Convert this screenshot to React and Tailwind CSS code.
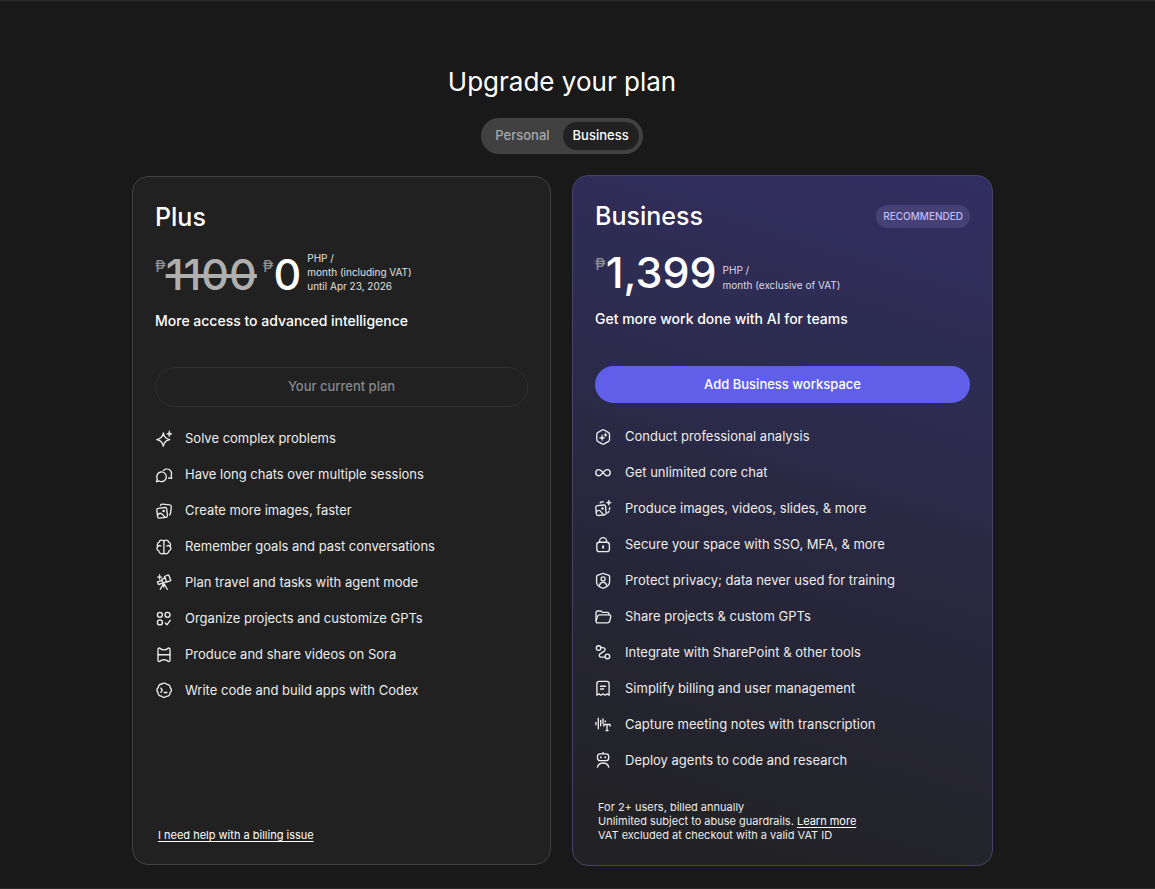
import React, { useState } from 'react'
import clsx from 'clsx'

function Icon({ children }) {
  return (
    <svg
      className="size-[18px] shrink-0"
      viewBox="0 0 18 18"
      fill="none"
      stroke="currentColor"
      strokeWidth="1.35"
      strokeLinecap="round"
      strokeLinejoin="round"
      aria-hidden="true"
    >
      {children}
    </svg>
  )
}

const icons = {
  sparkles: (
    <>
      <path d="M8.3 3c.7 4.200 2.200 5.900 6.400 6.600-4.200.7-5.700 2.400-6.400 6.600-.7-4.200-2.300-5.900-6.500-6.600C6 8.900 7.600 7.200 8.300 3Z" />
      <path fill="currentColor" strokeWidth=".7" d="M14.300 1c.3 2 .8 2.600 2.700 2.900-1.900.3-2.400.9-2.700 2.900-.3-2-.8-2.600-2.700-2.900 1.900-.3 2.400-.9 2.700-2.900Z" />
    </>
  ),
  chats: (
    <>
      <path d="M1.500 15.700l.8-2.700a4.800 4.800 0 1 1 2 2l-2.800.7Z" />
      <path d="M8.500 4.400c1-1 2.300-1.600 3.700-1.500a4.600 4.600 0 0 1 4 6.500l.5 3-3.100-.4" />
    </>
  ),
  images: (
    <>
      <path d="M3.300 6.300l6.500-.8a1.700 1.700 0 0 1 1.900 1.400l.7 6.500a1.700 1.700 0 0 1-1.400 1.900l-6.500.8A1.700 1.700 0 0 1 2.600 14.700l-.8-6.500A1.700 1.700 0 0 1 3.300 6.300Z" />
      <path d="M2.500 13.200c2-2.600 3.600-2.500 5.200-.4l2.500 2.600" />
      <circle cx="8.600" cy="9" r=".6" fill="currentColor" />
      <path d="M5.400 3.500c.3-1 1-1.500 2-1.400l7.300.8c1.100.2 1.800 1 1.600 2.100l-.8 6.400c-.1.700-.5 1.200-1.100 1.400" />
    </>
  ),
  brain: (
    <>
      <path d="M8.900 2.300v13.200M8.900 3.300C7.800 1.400 4.500 1.700 4.200 4.200 2.400 4.700 1.700 6.900 2.800 8.200c-1.500 1.400-1 4 1 4.600.3 2.900 3.900 3.900 5.100 2M8.900 3.300c1.100-1.900 4.400-1.600 4.700.9 1.800.5 2.500 2.700 1.400 4 1.500 1.400 1 4-1 4.600-.3 2.900-3.900 3.900-5.100 2" />
      <path d="M3 8.200c.9-.8 2-.8 2.900-.2M14.800 8.200c-.9-.8-2-.8-2.900-.2" />
    </>
  ),
  telescope: (
    <>
      <path fill="currentColor" strokeWidth=".6" d="M4.600.4c.3 1.900.8 2.400 2.600 2.700-1.800.3-2.300.8-2.600 2.700-.3-1.900-.8-2.400-2.600-2.700C3.800 2.800 4.300 2.300 4.600.4Z" />
      <path d="M9.600 2.500l3.200-1.500c.5-.2.900 0 1.100.5l1.800 4.400c.2.500 0 .9-.5 1L11.600 8 9.600 2.500ZM10 3.700L6.700 5.500l1.400 3.600 3.500-1.400M6.900 6.300L2.500 7.900l1 2.700 4.300-1.700" />
      <path d="M8.700 9.800v3.200M8.200 10l-2.900 5.300M9.300 10l2.900 5.300" />
    </>
  ),
  apps: (
    <>
      <circle cx="4.900" cy="4.800" r="2.500" />
      <circle cx="12.500" cy="4.800" r="2.500" />
      <circle cx="4.900" cy="12.400" r="2.500" />
      <path d="M10.200 13.100l1.700 1.700 3.300-4.500" />
    </>
  ),
  film: (
    <>
      <path d="M3 3.300c0-1.300 1.500-1.800 2.300-.8.700 1 1.600 1.300 3.700 1.300s3-.3 3.700-1.300c.8-1 2.300-.5 2.300.8v10.900c0 1.300-1.500 1.800-2.300.8-.7-1-1.600-1.300-3.700-1.300s-3 .3-3.700 1.300c-.8 1-2.300.5-2.300-.8V3.300Z" />
      <path d="M3 8.700h12" />
    </>
  ),
  codex: (
    <>
      <path d="M6.900 2c1.500-1.300 3.700-1.200 5 .3 1.900.1 3.400 1.600 3.400 3.500 1.300 1.500 1.200 3.700-.2 5-.1 1.900-1.600 3.500-3.600 3.500-1.500 1.300-3.700 1.200-5-.2-1.900-.1-3.500-1.600-3.500-3.600-1.300-1.500-1.200-3.700.3-5C3.400 3.600 4.900 2.100 6.900 2Z" />
      <path d="M5.900 6.100l1.300 2.100-1.300 2.100M9.200 10.500h2.700" />
    </>
  ),
  analysis: (
    <>
      <path d="M7.200 2a1.900 1.900 0 0 1 1.900 0l4.500 2.600c.6.400.9.900.9 1.600v5.500c0 .7-.3 1.200-.9 1.600L9.100 15.900a1.900 1.900 0 0 1-1.900 0l-4.500-2.600c-.6-.4-.9-.9-.9-1.600V6.200c0-.7.3-1.200.9-1.600L7.200 2Z" />
      <path fill="currentColor" strokeWidth=".5" d="M7.100 7.100c.4 1.900.9 2.400 2.700 2.800-1.800.4-2.300.9-2.700 2.800-.4-1.900-.9-2.400-2.700-2.800 1.800-.4 2.300-.9 2.700-2.800ZM10.500 5.200c.2 1.200.6 1.600 1.700 1.800-1.100.2-1.500.6-1.700 1.800-.2-1.200-.6-1.600-1.700-1.800 1.100-.2 1.500-.6 1.700-1.800Z" />
    </>
  ),
  infinity: <path d="M8 8.700C6.400 6.600 5.300 5.600 3.900 5.600a3.100 3.100 0 0 0 0 6.200c1.400 0 2.500-1 4.100-3.100s2.700-3.100 4.100-3.100a3.100 3.100 0 0 1 0 6.200c-1.400 0-2.500-1-4.100-3.100Z" />,
  media: (
    <>
      <path d="M2.300 5.700l6.300-.7a1.700 1.700 0 0 1 1.900 1.400l.6 6.500a1.700 1.700 0 0 1-1.500 1.900l-6.400.7a1.700 1.700 0 0 1-1.800-1.500L.8 7.600a1.700 1.700 0 0 1 1.500-1.900Z" />
      <path d="M1.200 12.100c2-2.400 3.500-2.100 5 0l2.500 2.800" />
      <circle cx="7.500" cy="8.500" r=".6" fill="currentColor" />
      <path d="M5.200 2.900c.4-.7.900-1 1.600-1h1.500M14.700 7.700l-.3 1.600M14 11.200c-.2.900-.6 1.400-1.300 1.700" />
      <path fill="currentColor" strokeWidth=".7" d="M13.800 0c.3 1.900.8 2.400 2.600 2.700-1.800.3-2.300.8-2.600 2.700-.3-1.900-.8-2.400-2.600-2.700 1.800-.3 2.300-.8 2.600-2.700Z" />
    </>
  ),
  lock: (
    <>
      <rect x="1.800" y="6.200" width="12.600" height="9.400" rx="2.400" />
      <path d="M4.600 6V5.100a3.500 3.500 0 0 1 7 0V6" />
      <path strokeWidth="1.900" d="M8.100 10.300v1.400" />
    </>
  ),
  shield: (
    <>
      <path d="M7.300 1.600c.5-.2 1.100-.2 1.600 0l4.500 1.600c.8.300 1.200.8 1.200 1.600V10c0 3.200-2.400 4.700-5.400 5.900-.7.300-1.500.3-2.200 0-3-1.200-5.400-2.700-5.400-5.900V4.800c0-.8.400-1.300 1.200-1.600l4.500-1.600Z" />
      <circle cx="8.100" cy="6.900" r="2" />
      <path d="M4.500 13.200c.6-2 1.800-2.800 3.600-2.800s3 .8 3.600 2.800" />
    </>
  ),
  folder: (
    <>
      <path d="M1 12.400V4.700C1 3.700 1.700 3 2.700 3h2.500c.6 0 1 .2 1.400.6.400.5.800.7 1.400.7h4.200c1.100 0 1.800.7 1.800 1.800v.7" />
      <path d="M4.800 6.900h9.500c1.100 0 1.700.8 1.400 1.800l-1.100 4.600c-.3 1-.9 1.500-1.900 1.500h-10c-1.200 0-1.900-.9-1.600-2l1.400-4.300c.3-1 1.200-1.600 2.300-1.600Z" />
    </>
  ),
  connect: (
    <>
      <circle cx="3.600" cy="4" r="2.300" />
      <circle cx="12.400" cy="12.400" r="2.300" />
      <path d="M5.900 3.600h1.800c2.500 0 3.200 2.200 1.500 3.500L5.100 9.900c-1.600 1.200-.9 3.200 1.200 3.200H10" />
    </>
  ),
  receipt: (
    <>
      <path d="M1.900 15.200V3.600c0-1.400.8-2.200 2.200-2.200h7.800c1.400 0 2.200.8 2.200 2.200v11.600l-2-1.300-2 1.300-2-1.300-2.100 1.300-2-1.300-2.100 1.300Z" />
      <path d="M5.500 6.200h5M5.500 9h3" />
    </>
  ),
  transcript: (
    <>
      <path d="M.9 6.500v2.200M3.300 2.200v10.500M5.700 4.500v5.300M8 2.800v4.700M10.300 4.800v1" />
      <path d="M8.900 10V8.500h6.200V10M12 8.600v6M10.900 14.600h2.200" />
    </>
  ),
  robot: (
    <>
      <rect x="2.500" y="1.900" width="11.200" height="6.700" rx="2.700" />
      <path d="M8.100.6v1.200M2.500 15.100c.6-2.600 2.600-4.100 5.600-4.100s5 1.500 5.600 4.100" />
      <path strokeWidth="1.700" d="M5.900 5v.5M10.300 5v.5" />
    </>
  ),
}

const plusFeatures = [
  ['sparkles', 'Solve complex problems'],
  ['chats', 'Have long chats over multiple sessions'],
  ['images', 'Create more images, faster'],
  ['brain', 'Remember goals and past conversations'],
  ['telescope', 'Plan travel and tasks with agent mode'],
  ['apps', 'Organize projects and customize GPTs'],
  ['film', 'Produce and share videos on Sora'],
  ['codex', 'Write code and build apps with Codex'],
]

const businessFeatures = [
  ['analysis', 'Conduct professional analysis'],
  ['infinity', 'Get unlimited core chat'],
  ['media', 'Produce images, videos, slides, & more'],
  ['lock', 'Secure your space with SSO, MFA, & more'],
  ['shield', 'Protect privacy; data never used for training'],
  ['folder', 'Share projects & custom GPTs'],
  ['connect', 'Integrate with SharePoint & other tools'],
  ['receipt', 'Simplify billing and user management'],
  ['transcript', 'Capture meeting notes with transcription'],
  ['robot', 'Deploy agents to code and research'],
]

function Features({ items }) {
  return (
    <ul>
      {items.map(([icon, label]) => (
        <li key={icon} className="flex h-9 items-center gap-3 text-[13px] text-[#ececec]">
          <Icon>{icons[icon]}</Icon>
          {label}
        </li>
      ))}
    </ul>
  )
}

function Peso() {
  return <span className="self-start pt-1 text-base leading-6 text-[#929292]">₱</span>
}

export default function App() {
  const [tab, setTab] = useState('Business')

  return (
    <main className="min-h-screen border-y border-[#2a2a2a] bg-[#191919] pt-16 pr-[31px] pb-[22px] font-['Inter',sans-serif] text-white">
      <h1 className="text-center text-[26px] leading-[34px]">Upgrade your plan</h1>

      <div role="group" aria-label="Plan type" className="mx-auto mt-[19px] flex h-9 w-fit gap-[3px] rounded-full bg-[#414141] p-1 text-[13px] font-medium">
        {['Personal', 'Business'].map((name) => (
          <button
            key={name}
            type="button"
            aria-pressed={tab === name}
            onClick={() => setTab(name)}
            className={clsx('rounded-full px-[10px]', tab === name ? 'bg-[#212121] text-white' : 'text-[#a8a8a8]')}
          >
            {name}
          </button>
        ))}
      </div>

      <div className="mx-auto mt-[21px] grid max-w-[862px] grid-cols-2 gap-5">
        <section className="m-px flex flex-col rounded-2xl border border-[#424242] bg-[#212121] px-[22px] pt-6 pb-[22px]">
          <h2 className="text-[25px] leading-8 font-medium">Plus</h2>
          <div className="mt-[17px] flex h-12 items-center">
            <Peso />
            <s className="text-[43px] leading-none font-medium text-[#afafaf]">1100</s>
            <span className="w-[6px]" />
            <Peso />
            <span className="text-[43px] leading-none font-medium">0</span>
            <p className="mb-1 ml-[6px] text-[10px] leading-[14px] text-[#e0e0e0]">
              PHP /<br />month (including VAT)<br />until Apr 23, 2026
            </p>
          </div>
          <p className="mt-[11px] text-[14px] leading-6 font-medium">More access to advanced intelligence</p>
          <button type="button" disabled className="mt-[34px] mb-[14px] h-10 rounded-full border border-[#303030] text-[13px] font-medium text-[#888888]">
            Your current plan
          </button>
          <Features items={plusFeatures} />
          <p className="mt-auto pl-[3px] text-[11px] leading-[14px]">
            <a href="#billing" className="underline underline-offset-2">I need help with a billing issue</a>
          </p>
        </section>

        <section className="flex flex-col rounded-2xl border border-[#474268] bg-[linear-gradient(197deg,#322e61_0%,#2d2c50_30%,#272639_60%,#222224_95%)] px-[22px] pt-6 pb-[23px]">
          <div className="flex items-center justify-between">
            <h2 className="text-[25px] leading-8 font-medium">Business</h2>
            <span className="rounded-full bg-[#454174] px-[7px] py-1 text-[10px] leading-[15px] font-medium text-[#c4bcfa]">RECOMMENDED</span>
          </div>
          <div className="mt-4 flex h-12 items-center">
            <Peso />
            <span className="text-[43px] leading-none font-medium">1,399</span>
            <p className="mt-3 ml-[6px] text-[10px] leading-[15px] text-[#dcdbe8]">
              PHP /<br />month (exclusive of VAT)
            </p>
          </div>
          <p className="mt-[11px] text-[14px] leading-6 font-medium">Get more work done with AI for teams</p>
          <button type="button" className="mt-[35px] mb-4 h-[37px] rounded-full bg-[#605fea] text-[13px] font-medium">
            Add Business workspace
          </button>
          <Features items={businessFeatures} />
          <p className="mt-[21px] pl-[3px] text-[11px] leading-[14px] text-[#ececec]">
            For 2+ users, billed annually<br />
            Unlimited subject to abuse guardrails. <a href="#guardrails" className="text-white underline underline-offset-2">Learn more</a><br />
            VAT excluded at checkout with a valid VAT ID
          </p>
        </section>
      </div>
    </main>
  )
}
